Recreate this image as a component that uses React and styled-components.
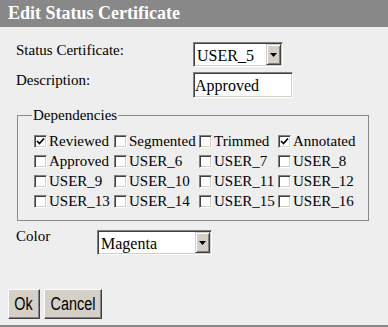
import React from "react"
import styled, { createGlobalStyle } from "styled-components"

const GlobalStyle = createGlobalStyle`
  html, body {
    margin: 0;
    padding: 0;
    background: #eeeeee;
  }
  body {
    font-family: "Liberation Serif", "Times New Roman", serif;
    color: #000;
  }
`

const dependencies = [
  { name: "Reviewed", checked: true },
  { name: "Segmented" },
  { name: "Trimmed" },
  { name: "Annotated", checked: true },
  { name: "Approved" },
  { name: "USER_6" },
  { name: "USER_7" },
  { name: "USER_8" },
  { name: "USER_9" },
  { name: "USER_10" },
  { name: "USER_11" },
  { name: "USER_12" },
  { name: "USER_13" },
  { name: "USER_14" },
  { name: "USER_15" },
  { name: "USER_16" },
]

const ArrowIcon = () => (
  <svg width="7" height="4" viewBox="0 0 7 4">
    <path d="M0 0 H7 L3.5 4 Z" fill="#000" />
  </svg>
)

const CheckIcon = () => (
  <svg width="9" height="9" viewBox="0 0 9 9">
    <path d="M1 4 L3.5 6.5 L8 1.5" fill="none" stroke="#000" strokeWidth="1.7" />
  </svg>
)

const Select = ({ value, width }) => (
  <SelectBox $width={width}>
    <SelectValue>{value}</SelectValue>
    <DropButton>
      <ArrowIcon />
    </DropButton>
  </SelectBox>
)

const Checkbox = ({ name, checked }) => (
  <CheckCell>
    <CheckBox>{checked && <CheckIcon />}</CheckBox>
    <CheckLabel>{name}</CheckLabel>
  </CheckCell>
)

const App = () => {
  return (
    <Dialog>
      <GlobalStyle />
      <TitleBar>Edit Status Certificate</TitleBar>
      <Body>
        <FieldRow>
          <Label>Status Certificate:</Label>
          <Select value="USER_5" width={90} />
        </FieldRow>
        <FieldRow $gap={5}>
          <Label>Description:</Label>
          <TextInput>Approved</TextInput>
        </FieldRow>
        <Group>
          <Legend>Dependencies</Legend>
          <CheckGrid>
            {dependencies.map((dep) => (
              <Checkbox key={dep.name} name={dep.name} checked={dep.checked} />
            ))}
          </CheckGrid>
        </Group>
        <ColorRow>
          <Label>Color</Label>
          <ColorSelect>
            <Select value="Magenta" width={115} />
          </ColorSelect>
        </ColorRow>
      </Body>
      <Footer>
        <Button $width={32}>
          <ButtonText>Ok</ButtonText>
        </Button>
        <Button $width={58}>
          <ButtonText>Cancel</ButtonText>
        </Button>
      </Footer>
      <BottomLine />
    </Dialog>
  )
}

const Dialog = styled.div`
  width: 388px;
  height: 327px;
  display: flex;
  flex-direction: column;
  background: #eeeeee;
  overflow: hidden;
  font-family: "Liberation Serif", "Times New Roman", serif;
`

const TitleBar = styled.div`
  height: 27px;
  flex-shrink: 0;
  background: #888888;
  color: #ffffff;
  font-weight: bold;
  font-size: 18px;
  line-height: 27px;
  padding-left: 8px;
  white-space: nowrap;
`

const Body = styled.div`
  flex: 1;
  padding: 15px 0 0 16px;
`

const FieldRow = styled.div`
  display: grid;
  grid-template-columns: 177px auto;
  align-items: start;
  margin-top: ${(p) => p.$gap || 0}px;
`

const Label = styled.div`
  font-size: 15px;
  line-height: 17px;
  white-space: nowrap;
`

const SelectBox = styled.div`
  box-sizing: border-box;
  width: ${(p) => p.$width}px;
  height: 25px;
  display: flex;
  background: #ffffff;
  border: 1px solid;
  border-color: #808080 #ffffff #ffffff #808080;
  box-shadow: inset 1px 1px 0 #404040, inset -1px -1px 0 #d4d0c8;
  padding: 1px;
`

const SelectValue = styled.div`
  flex: 1;
  font-size: 16px;
  line-height: 18px;
  padding: 3px 0 0 2px;
  white-space: nowrap;
  overflow: hidden;
`

const DropButton = styled.div`
  box-sizing: border-box;
  width: 15px;
  flex-shrink: 0;
  display: flex;
  align-items: center;
  justify-content: center;
  background: #d4d0c8;
  border: 1px solid;
  border-color: #d4d0c8 #404040 #404040 #d4d0c8;
  box-shadow: inset 1px 1px 0 #ffffff, inset -1px -1px 0 #808080;
`

const TextInput = styled.div`
  box-sizing: border-box;
  width: 100px;
  height: 26px;
  background: #ffffff;
  border: 1px solid;
  border-color: #808080 #ffffff #ffffff #808080;
  box-shadow: inset 1px 1px 0 #404040, inset -1px -1px 0 #d4d0c8;
  font-size: 16px;
  line-height: 18px;
  padding: 4px 0 0 1px;
  white-space: nowrap;
`

const Group = styled.fieldset`
  box-sizing: border-box;
  width: 352px;
  margin: 9px 0 0 1px;
  padding: 7px 0 9px 16px;
  border: 1px solid #8a8a8a;
  min-width: 0;
`

const Legend = styled.legend`
  font-size: 15px;
  line-height: 17px;
  padding: 0 1px;
  margin-left: -2px;
`

const CheckGrid = styled.div`
  display: grid;
  grid-template-columns: 80px 85px 79px auto;
  grid-auto-rows: 20px;
`

const CheckCell = styled.div`
  display: flex;
  align-items: center;
  gap: 2px;
  white-space: nowrap;
`

const CheckBox = styled.div`
  box-sizing: border-box;
  width: 13px;
  height: 13px;
  flex-shrink: 0;
  display: flex;
  align-items: center;
  justify-content: center;
  background: #ffffff;
  border: 1px solid;
  border-color: #808080 #ffffff #ffffff #808080;
  box-shadow: inset 1px 1px 0 #404040, inset -1px -1px 0 #d4d0c8;
`

const CheckLabel = styled.span`
  font-size: 15px;
  line-height: 20px;
`

const ColorRow = styled.div`
  display: grid;
  grid-template-columns: 81px auto;
  align-items: start;
  margin-top: 7px;
`

const ColorSelect = styled.div`
  margin-top: 2px;
`

const Footer = styled.div`
  display: flex;
  gap: 4px;
  padding: 0 0 6px 8px;
`

const Button = styled.div`
  box-sizing: border-box;
  width: ${(p) => p.$width}px;
  height: 30px;
  display: flex;
  align-items: center;
  justify-content: center;
  background: #d4d0c8;
  border: 1px solid;
  border-color: #ffffff #404040 #404040 #ffffff;
  box-shadow: inset -1px -1px 0 #808080;
  font-family: "Liberation Sans", Arial, sans-serif;
  font-size: 18px;
  line-height: 20px;
`

const ButtonText = styled.span`
  display: inline-block;
  transform: scaleX(0.8);
  white-space: nowrap;
`

const BottomLine = styled.div`
  height: 2px;
  flex-shrink: 0;
  background: #888888;
`

export default App
